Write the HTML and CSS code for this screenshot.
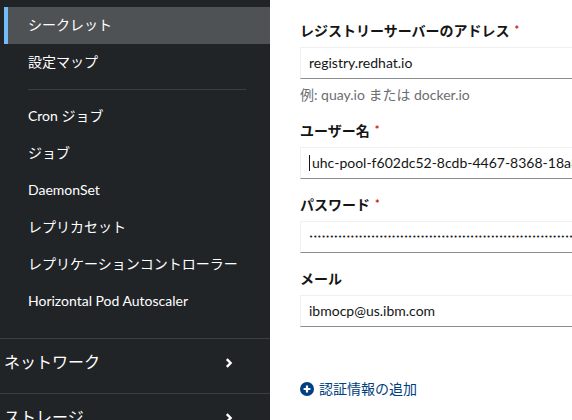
FILE: index.html
```html
<!DOCTYPE html>
<html lang="ja">
<head>
<meta charset="utf-8">
<title>シークレット</title>
<link rel="stylesheet" href="styles.css">
</head>
<body>
<div class="page">
  <nav class="sidebar">
    <ul class="subnav">
      <li class="item active">シークレット</li>
      <li class="item">設定マップ</li>
      <li class="sep"></li>
      <li class="item">Cron ジョブ</li>
      <li class="item">ジョブ</li>
      <li class="item">DaemonSet</li>
      <li class="item">レプリカセット</li>
      <li class="item">レプリケーションコントローラー</li>
      <li class="item">Horizontal Pod Autoscaler</li>
    </ul>
    <div class="section">
      <span>ネットワーク</span>
      <svg class="chev" width="8" height="10" viewBox="0 0 8 10"><path d="M1.8 1.2 L5.6 5 L1.8 8.8" fill="none" stroke="#fff" stroke-width="2.4"/></svg>
    </div>
    <div class="section">
      <span>ストレージ</span>
      <svg class="chev" width="8" height="10" viewBox="0 0 8 10"><path d="M1.8 1.2 L5.6 5 L1.8 8.8" fill="none" stroke="#fff" stroke-width="2.4"/></svg>
    </div>
  </nav>
  <main class="content">
    <form class="form">
      <div class="group">
        <label class="label">レジストリーサーバーのアドレス<span class="req">*</span></label>
        <div class="input">registry.redhat.io</div>
        <div class="helper">例: quay.io または docker.io</div>
      </div>
      <div class="group">
        <label class="label">ユーザー名<span class="req">*</span></label>
        <div class="input"><span class="caret"></span>uhc-pool-f602dc52-8cdb-4467-8368-18a3b9c2e7f1</div>
      </div>
      <div class="group">
        <label class="label">パスワード<span class="req">*</span></label>
        <div class="input dots">••••••••••••••••••••••••••••••••••••••••••••••••••••••••••••••••••••••••••••••••••••••</div>
      </div>
      <div class="group">
        <label class="label">メール</label>
        <div class="input">ibmocp@us.ibm.com</div>
      </div>
      <div class="add">
        <svg width="14" height="14" viewBox="0 0 14 14"><circle cx="7" cy="7" r="7" fill="#004080"/><path d="M7 3.6 V10.4 M3.6 7 H10.4" stroke="#fff" stroke-width="2.2"/></svg>
        <span>認証情報の追加</span>
      </div>
    </form>
  </main>
</div>
</body>
</html>
```
FILE: styles.css
```css
* { box-sizing: border-box; }
html, body { margin: 0; padding: 0; }
body {
  width: 572px;
  height: 420px;
  overflow: hidden;
  background: #fff;
  font-family: Lato, "Noto Sans CJK JP", sans-serif;
  font-size: 14px;
  color: #151515;
}
.page {
  display: flex;
  height: 420px;
  overflow: hidden;
}
.sidebar {
  width: 270px;
  flex: none;
  background: #212427;
  color: #fff;
  padding-top: 7px;
}
.subnav {
  list-style: none;
  margin: 0;
  padding: 0 0 18px 4px;
}
.item {
  height: 37px;
  line-height: 35px;
  padding-left: 24px;
  font-size: 14px;
  white-space: nowrap;
}
.item.active {
  background: #4f5255;
  border-left: 4px solid #73bcf7;
  padding-left: 20px;
}
.sep {
  height: 1px;
  background: #3c3f42;
  margin: 8px 24px 8px 24px;
}
.section {
  height: 55px;
  border-top: 1px solid #3c3f42;
  display: flex;
  align-items: center;
  justify-content: space-between;
  padding: 0 37px 10px 4px;
  font-size: 16px;
}
.chev { display: block; margin-top: 4px; }
.content {
  flex: 1;
  min-width: 0;
  overflow: hidden;
  padding: 20px 0 0 30px;
}
.form {
  width: 600px;
  display: flex;
  flex-direction: column;
}
.group {
  margin-bottom: 15px;
}
.label {
  display: flex;
  align-items: center;
  height: 21px;
  font-weight: 700;
  line-height: 21px;
  margin-bottom: 6px;
  white-space: nowrap;
}
.req {
  color: #c9190b;
  margin-left: 5px;
  font-size: 11px;
  line-height: 1;
  margin-top: -3px;
}
.input {
  height: 32px;
  line-height: 30px;
  border: 1px solid #f0f0f0;
  border-bottom-color: #8a8d90;
  padding: 0 8px;
  white-space: nowrap;
  overflow: hidden;
  font-size: 14px;
}
.caret {
  display: inline-block;
  width: 1px;
  height: 16px;
  background: #151515;
  vertical-align: -3px;
  margin-right: 2px;
}
.dots {
  font-size: 7px;
  letter-spacing: 0;
  font-family: "DejaVu Sans", sans-serif;
}
.helper {
  margin-top: 5px;
  height: 21px;
  color: #6a6e73;
  line-height: 21px;
  white-space: nowrap;
}
.add {
  margin-top: 36px;
  height: 21px;
  display: flex;
  align-items: center;
  gap: 5px;
  color: #004080;
  line-height: 21px;
}
.add svg { display: block; }
```
